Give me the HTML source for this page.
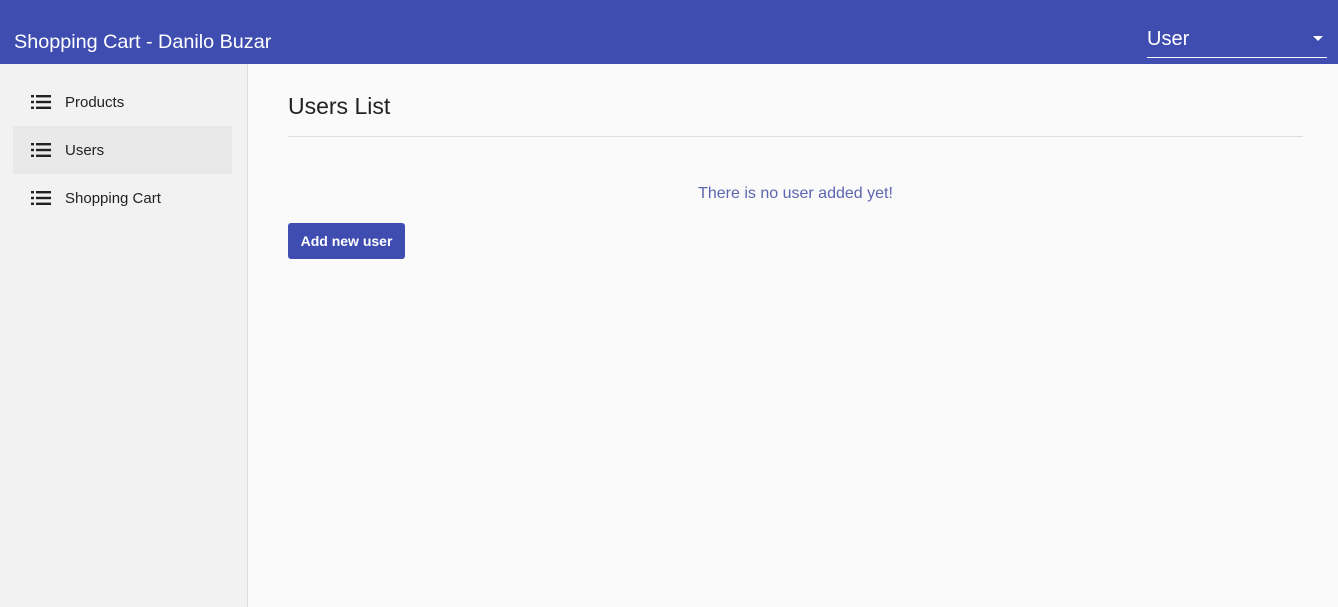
<!DOCTYPE html><html><head><style>
body{margin:0;width:1338px;height:607px;font-family:"Liberation Sans",sans-serif;background:#fafafa;position:relative;overflow:hidden}
.top{position:absolute;left:0;top:0;width:1338px;height:64px;background:#3f4db1;color:#fff}
.title{position:absolute;left:14px;top:31px;font-size:19.8px}
.sel{position:absolute;left:1147px;top:26px;width:180px;height:31px;border-bottom:1px solid #fff;font-size:20px}
.sel span{position:relative;top:2px}
.sel .ar{position:absolute;right:4px;top:10px;width:0;height:0;border-left:5px solid transparent;border-right:5px solid transparent;border-top:5px solid #fff}
.side{position:absolute;left:0;top:64px;width:247px;height:543px;background:#f2f2f2;border-right:1px solid #ddd}
.item{position:absolute;left:13px;width:219px;height:48px;font-size:15px;color:#222}
.item span{position:absolute;left:52px;top:16px}
.item svg{position:absolute;left:18px;top:17px}
h1{position:absolute;left:288px;top:93px;margin:0;font-weight:normal;font-size:23px;color:#222}
.hr{position:absolute;left:288px;top:136px;width:1015px;height:1px;background:#ddd}
.msg{position:absolute;left:288px;width:1015px;top:185px;text-align:center;color:#5c65b0;font-size:16px}
.btn{position:absolute;left:288px;top:223px;width:117px;height:36px;background:#3f4db1;color:#fff;border-radius:3px;font-size:14px;font-weight:bold;text-align:center;line-height:36px}
</style></head><body>
<div class="top"><div class="title">Shopping Cart - Danilo Buzar</div><div class="sel"><span>User</span><div class="ar"></div></div></div>
<div class="side">
<div class="item" style="top:14px"><svg width="20" height="14"><g fill="#222"><rect x="0" y="0" width="3" height="2.4"/><rect x="0" y="5.8" width="3" height="2.4"/><rect x="0" y="11.6" width="3" height="2.4"/><rect x="5" y="0" width="15" height="2.4"/><rect x="5" y="5.8" width="15" height="2.4"/><rect x="5" y="11.6" width="15" height="2.4"/></g></svg><span>Products</span></div>
<div class="item" style="top:62px;background:#e9e9e9"><svg width="20" height="14"><g fill="#222"><rect x="0" y="0" width="3" height="2.4"/><rect x="0" y="5.8" width="3" height="2.4"/><rect x="0" y="11.6" width="3" height="2.4"/><rect x="5" y="0" width="15" height="2.4"/><rect x="5" y="5.8" width="15" height="2.4"/><rect x="5" y="11.6" width="15" height="2.4"/></g></svg><span>Users</span></div>
<div class="item" style="top:110px"><svg width="20" height="14"><g fill="#222"><rect x="0" y="0" width="3" height="2.4"/><rect x="0" y="5.8" width="3" height="2.4"/><rect x="0" y="11.6" width="3" height="2.4"/><rect x="5" y="0" width="15" height="2.4"/><rect x="5" y="5.8" width="15" height="2.4"/><rect x="5" y="11.6" width="15" height="2.4"/></g></svg><span>Shopping Cart</span></div>
</div>
<h1>Users List</h1><div class="hr"></div>
<div class="msg">There is no user added yet!</div>
<div class="btn">Add new user</div>
</body></html>
